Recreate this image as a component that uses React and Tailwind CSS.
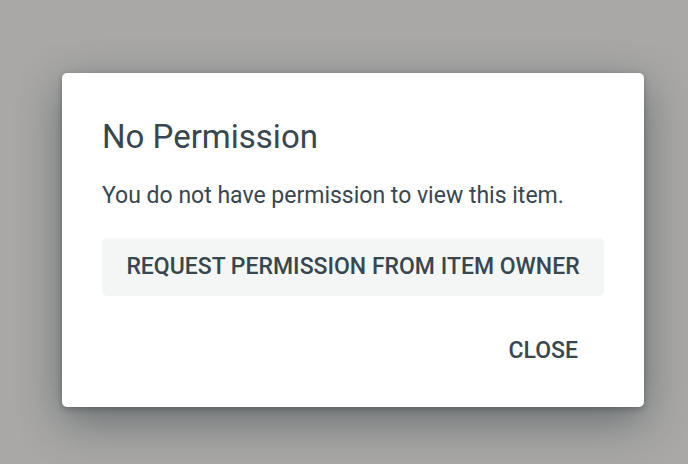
import React from 'react';

const App = () => {
  return (
    <div
      className="flex h-[464px] w-[688px] items-start bg-[#a9a8a7] pl-[62px] pt-[73px]"
      style={{ fontFamily: 'Roboto, "Noto Sans", sans-serif' }}
    >
      <div className="w-[582px] rounded-[5px] bg-white px-10 pb-[34px] pt-[44px] text-[#37474f] shadow-[0_14px_45px_rgba(20,35,40,0.45),0_2px_6px_rgba(0,0,0,0.25)]">
        <h2 className="text-[33px] leading-[40px] font-normal">No Permission</h2>
        <p className="mt-[25px] text-[23px] leading-[28px]">You do not have permission to view this item.</p>
        <button className="mt-[28px] flex h-[58px] w-full items-center justify-center rounded-[5px] bg-[#f4f6f6] text-[23px] font-medium uppercase">
          Request permission from item owner
        </button>
        <div className="mt-[33px] flex justify-end">
          <button className="px-[26px] py-[8px] text-[23px] leading-[28px] font-medium uppercase">Close</button>
        </div>
      </div>
    </div>
  );
};

export default App;
